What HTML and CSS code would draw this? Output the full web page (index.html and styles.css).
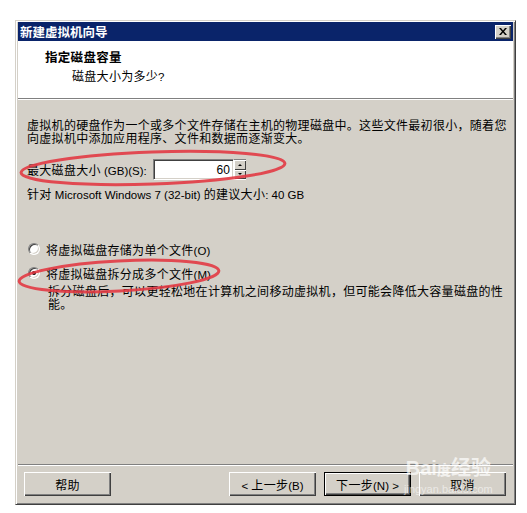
FILE: index.html
```html
<!DOCTYPE html>
<html lang="zh-CN">
<head>
    <meta charset="UTF-8">
    <title>新建虚拟机向导</title>
    <link rel="stylesheet" href="styles.css">
</head>
<body>

    <div class="dialog">

        <div class="title-bar">
            <span class="title">新建虚拟机向导</span>
            <button class="close-btn">
                <svg width="8" height="7" viewBox="0 0 8 7">
                    <path d="M0 0h2l2 2.5L6 0h2L5 3.5 8 7H6L4 4.5 2 7H0l3-3.5z" fill="#000"/>
                </svg>
            </button>
        </div>

        <div class="header">
            <p class="header-title">指定磁盘容量</p>
            <p class="header-sub">磁盘大小为多少<span class="lat">?</span></p>
        </div>

        <div class="content">
            <p class="intro">虚拟机的硬盘作为一个或多个文件存储在主机的物理磁盘中。这些文件最初很小，随着您<br>向虚拟机中添加应用程序、文件和数据而逐渐变大。</p>

            <div class="size-row">
                <label>最大磁盘大小<span class="lat"> (GB)(S):</span></label>
                <div class="spin">
                    <div class="spin-input lat">60</div>
                    <div class="spin-btns">
                        <span class="spin-btn"><i class="arrow up"></i></span>
                        <span class="spin-btn"><i class="arrow down"></i></span>
                    </div>
                </div>
            </div>

            <p class="hint">针对<span class="lat"> Microsoft Windows 7 (32-bit) </span>的建议大小<span class="lat">: 40 GB</span></p>

            <div class="options">
                <div class="option">
                    <span class="radio"></span>
                    <span>将虚拟磁盘存储为单个文件<span class="lat">(O)</span></span>
                </div>
                <div class="option">
                    <span class="radio checked"></span>
                    <span>将虚拟磁盘拆分成多个文件<span class="lat">(M)</span></span>
                </div>
                <p class="option-desc">拆分磁盘后，可以更轻松地在计算机之间移动虚拟机，但可能会降低大容量磁盘的性<br>能。</p>
            </div>
        </div>

        <div class="footer">
            <button class="win-btn">帮助</button>
            <div class="nav-btns">
                <button class="win-btn"><span class="lat">&lt; </span>上一步<span class="lat">(B)</span></button>
                <button class="win-btn default">下一步<span class="lat">(N) &gt;</span></button>
                <button class="win-btn">取消</button>
            </div>
        </div>

    </div>

    <!-- red marks drawn over the screenshot -->
    <svg class="marks" width="527" height="513" viewBox="0 0 527 513">
        <ellipse cx="153" cy="168" rx="132" ry="16" transform="rotate(-2 153 168)"/>
        <ellipse cx="119" cy="276" rx="100" ry="15" transform="rotate(-3 119 276)"/>
    </svg>

    <div class="watermark">
        <span class="wm-logo">Bai<b>度</b>经验</span>
        <span class="wm-url">jingyan.baidu.com</span>
    </div>

</body>
</html>
```

FILE: styles.css
```css
*,*::before,*::after {
    box-sizing: border-box;
    margin: 0;
    padding: 0;
}

body {
    background-color: #fff;
    font-family: "Liberation Sans", "Noto Sans CJK SC", sans-serif;
    font-size: 12px;
    letter-spacing: 0.3px;
    color: #000;
    position: relative;
    width: 527px;
    height: 513px;
    overflow: hidden;
}

/* latin runs look like Tahoma 8pt, a bit narrower */
.lat {
    font-size: 11.5px;
    letter-spacing: 0;
}

/* dialog frame */
.dialog {
    margin: 20px 0 0 15px;
    width: 501px;
    height: 485px;
    background-color: #d4d0c8;
    border: 1px solid;
    border-color: #d4d0c8 #404040 #404040 #d4d0c8;
    box-shadow: inset 1px 1px #fff, inset -1px -1px #808080;
    padding: 1px 2px 2px 2px;
    display: flex;
    flex-direction: column;
}

.title-bar {
    height: 19px;
    background-color: #0a246a;
    display: flex;
    align-items: center;
    justify-content: space-between;
    padding: 0 2px 0 2px;
}

.title {
    color: #fff;
    font-weight: bold;
    font-size: 12.5px;
    letter-spacing: 0;
}

.close-btn {
    width: 16px;
    height: 14px;
    background-color: #d4d0c8;
    border: none;
    box-shadow: inset 1px 1px #fff, inset -1px -1px #404040, inset -2px -2px #808080;
    display: flex;
    align-items: center;
    justify-content: center;
}

/* white header */
.header {
    background-color: #fff;
    height: 58px;
    border-bottom: 1px solid #808080;
    box-shadow: 0 1px #fff;
    padding: 10px 0 0 27px;
}

.header-title {
    font-weight: bold;
    font-size: 12.5px;
    line-height: 14px;
}

.header-sub {
    padding-left: 27px;
    margin-top: 5px;
    line-height: 14px;
}

/* body */
.content {
    flex: 1;
    padding: 21px 0 0 9px;
}

.intro {
    line-height: 13px;
}

.size-row {
    display: flex;
    align-items: center;
    margin-top: 13px;
    gap: 6px;
}

.spin {
    display: flex;
    height: 21px;
}

.spin-input {
    width: 81px;
    background-color: #fff;
    border: 1px solid;
    border-color: #808080 #fff #fff #808080;
    box-shadow: inset 1px 1px #404040, inset -1px -1px #d4d0c8;
    text-align: right;
    padding: 3px 3px 0 0;
    line-height: 14px;
    font-size: 12px;
}

.spin-btns {
    width: 12px;
    display: flex;
    flex-direction: column;
    border-top: 1px solid #808080;
    border-bottom: 1px solid #fff;
}

.spin-btn {
    flex: 1;
    background-color: #d4d0c8;
    box-shadow: inset 1px 1px #fff, inset -1px -1px #404040;
    display: flex;
    align-items: center;
    justify-content: center;
}

.arrow {
    width: 0;
    height: 0;
    border-left: 2px solid transparent;
    border-right: 2px solid transparent;
}

.arrow.up {
    border-bottom: 2px solid #000;
}

.arrow.down {
    border-top: 2px solid #000;
}

.hint {
    margin-top: 8px;
    line-height: 14px;
}

.options {
    margin-top: 40px;
}

.option {
    display: flex;
    align-items: center;
    gap: 6px;
    height: 14px;
    margin-bottom: 10px;
    padding-left: 1px;
}

.radio {
    width: 12px;
    height: 12px;
    border-radius: 50%;
    background-color: #fff;
    border: 1px solid;
    border-color: #808080 #fff #fff #808080;
    box-shadow: inset 1px 1px #404040, inset -1px -1px #d4d0c8;
    display: flex;
    align-items: center;
    justify-content: center;
}

.radio.checked::after {
    content: "";
    width: 4px;
    height: 4px;
    border-radius: 50%;
    background-color: #000;
}

.option-desc {
    padding-left: 21px;
    margin-top: -4px;
    line-height: 12.5px;
}

/* footer */
.footer {
    height: 38px;
    border-top: 1px solid #808080;
    box-shadow: inset 0 1px #fff;
    display: flex;
    justify-content: space-between;
    padding: 7px 7px 0 6px;
}

.nav-btns {
    display: flex;
    gap: 8px;
}

.win-btn {
    width: 87px;
    height: 24px;
    font-family: "Liberation Sans", "Noto Sans CJK SC", sans-serif;
    font-size: 12px;
    letter-spacing: 0.3px;
    color: #000;
    background-color: #d4d0c8;
    border: none;
    box-shadow: inset 1px 1px #fff, inset -1px -1px #404040, inset -2px -2px #808080;
}

.win-btn.default {
    border: 1px solid #000;
}

/* red annotation marks */
.marks {
    position: absolute;
    top: 0;
    left: 0;
    pointer-events: none;
}

.marks ellipse {
    fill: none;
    stroke: #e23a44;
    stroke-width: 3;
    opacity: 0.9;
}

/* watermark */
.watermark {
    position: absolute;
    left: 404px;
    top: 452px;
    display: flex;
    flex-direction: column;
    align-items: center;
    color: rgba(255, 255, 255, 0.7);
    pointer-events: none;
}

.wm-logo {
    font-size: 20px;
    font-weight: bold;
    letter-spacing: 0;
}

.wm-logo b {
    font-size: 14px;
}

.wm-url {
    font-size: 11px;
    letter-spacing: 0;
    margin-top: 2px;
    color: rgba(255, 255, 255, 0.55);
}
```
